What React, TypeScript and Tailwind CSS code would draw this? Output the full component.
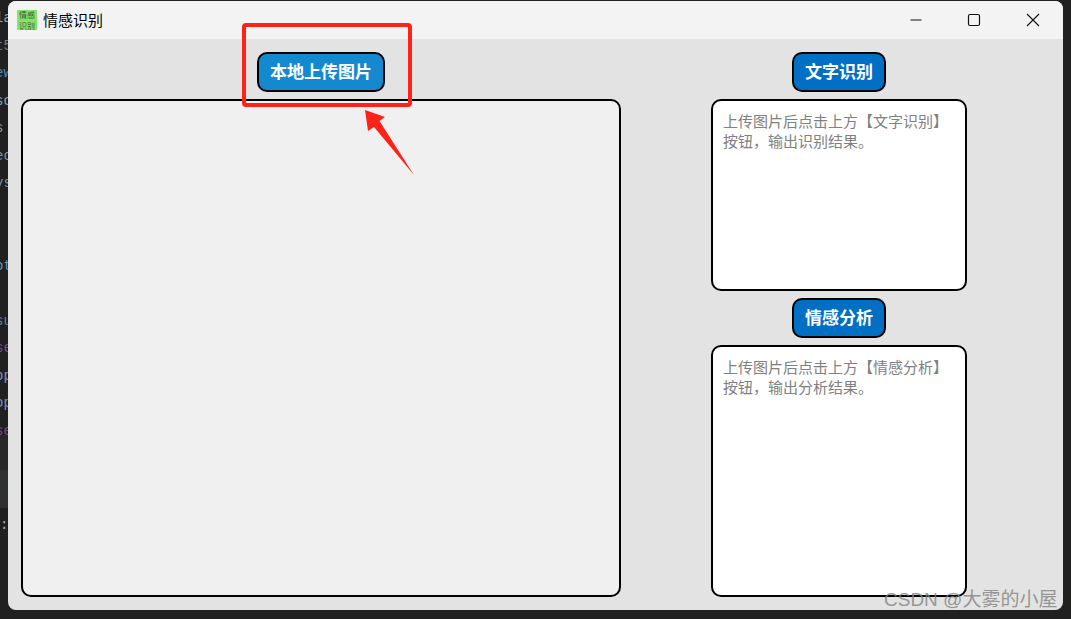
const CJK = "font-['Noto_Sans_CJK_SC','Noto_Sans',sans-serif]";

const codeRows: [string, string][] = [
  ["la", "text-[#7fa8c0]"], ["t5", "text-[#777c80]"], ["ew", "text-[#5a86b0]"], ["so", "text-[#84a0ae]"],
  ["s", "text-[#969696]"], ["ec", "text-[#7c93a2]"], ["ys", "text-[#7c93a2]"], ["", ""], ["", ""],
  ["ot", "text-[#6c90ac]"], ["", ""], ["su", "text-[#6c80a0]"], ["se", "text-[#7a4c78]"], ["op", "text-[#7c93ae]"],
  ["op", "text-[#7c93ae]"], ["se", "text-[#7a4c78]"],
];

function ActionButton({ label, color }: { label: string; color: string }) {
  return (
    <button className={`h-10 px-[11px] pb-[3px] rounded-[10px] border-2 border-black text-white font-bold text-[17px] leading-none ${color}`}>
      {label}
    </button>
  );
}

function ResultBox({ text, className }: { text: string; className: string }) {
  return (
    <div className={`w-64 bg-white border-2 border-black rounded-[10px] pl-2.5 pr-2 pt-[10px] text-[15px] leading-5 text-[#808080] ${className}`}>
      {text}
    </div>
  );
}

export default function App() {
  return (
    <div className={`relative w-[1071px] h-[619px] overflow-hidden bg-[#202020] flex ${CJK}`}>
      <div className="w-2 h-full overflow-hidden relative font-['Liberation_Mono',monospace] text-sm leading-[27.5px] pt-[5px]">
        <div className="absolute left-0 right-0 top-[435px] h-[35px] bg-[#282828]" />
        <div className="absolute left-0 right-0 top-[470px] h-[38px] bg-[#2f3131]" />
        {codeRows.map(([t, c], i) => (
          <div key={i} className={`h-[27.5px] whitespace-pre ${c} -ml-[5px] relative`}>{t}</div>
        ))}
        <div className="absolute left-0 top-[512px] text-[#b0b0b0]">:</div>
      </div>

      <div className="w-[1055px] h-[609px] mt-px rounded-lg overflow-hidden bg-[#e3e3e3] flex flex-col">
        <header className="h-[38px] shrink-0 bg-[#f3f3f3] flex items-center pl-[9px]">
          <div className="w-5 h-5 bg-[#86e36a] flex flex-col items-center justify-between text-[8px] leading-[9px] text-[#3f5a34] shrink-0">
            <span>情感</span>
            <span>识别</span>
          </div>
          <span className="ml-1.5 pb-[2px] text-[15px] text-black leading-none">情感识别</span>
          <div className="ml-auto flex items-center h-full">
            <svg width="14" height="14" viewBox="0 0 14 14" className="mr-[44px]">
              <path d="M1.5 7h11" stroke="#111" strokeWidth="1" fill="none" />
            </svg>
            <svg width="14" height="14" viewBox="0 0 14 14" className="mr-[45px]">
              <rect x="1.5" y="1.5" width="11" height="11" rx="1.5" stroke="#111" strokeWidth="1.2" fill="none" />
            </svg>
            <svg width="14" height="14" viewBox="0 0 14 14" className="mr-[23px]">
              <path d="M1 1l12 12M13 1L1 13" stroke="#111" strokeWidth="1.1" fill="none" />
            </svg>
          </div>
        </header>

        <main className="flex-1 flex pl-[13px] pt-[13px]">
          <section className="w-[600px] flex flex-col items-center gap-[7px]">
            <ActionButton label="本地上传图片" color="bg-[#1589d0]" />
            <div className="w-full h-[498px] bg-[#f0f0f0] border-2 border-black rounded-[10px]" />
          </section>
          <section className="ml-[90px] w-64 flex flex-col items-center gap-[7px]">
            <ActionButton label="文字识别" color="bg-[#006fc4]" />
            <ResultBox text="上传图片后点击上方【文字识别】按钮，输出识别结果。" className="h-[192px]" />
            <ActionButton label="情感分析" color="bg-[#006fc4]" />
            <ResultBox text="上传图片后点击上方【情感分析】按钮，输出分析结果。" className="h-[252px]" />
          </section>
        </main>
      </div>

      <div className="absolute left-[242px] top-[23px] w-[170px] h-[84px] border-[4px] border-[#ff2218] rounded-[4px]" />
      <svg className="absolute left-[360px] top-[105px]" width="60" height="75" viewBox="0 0 60 75">
        <path d="M5 5 L25 12 L19.5 16 L54 70 L14 22 L8 26 Z" fill="#ff2218" />
      </svg>
      <div className="absolute left-[884px] top-[588px] text-[19px] leading-6 text-[#808080]/80 font-['Liberation_Sans','Noto_Sans_CJK_SC',sans-serif] whitespace-nowrap">
        CSDN @大雾的小屋
      </div>
    </div>
  );
}
